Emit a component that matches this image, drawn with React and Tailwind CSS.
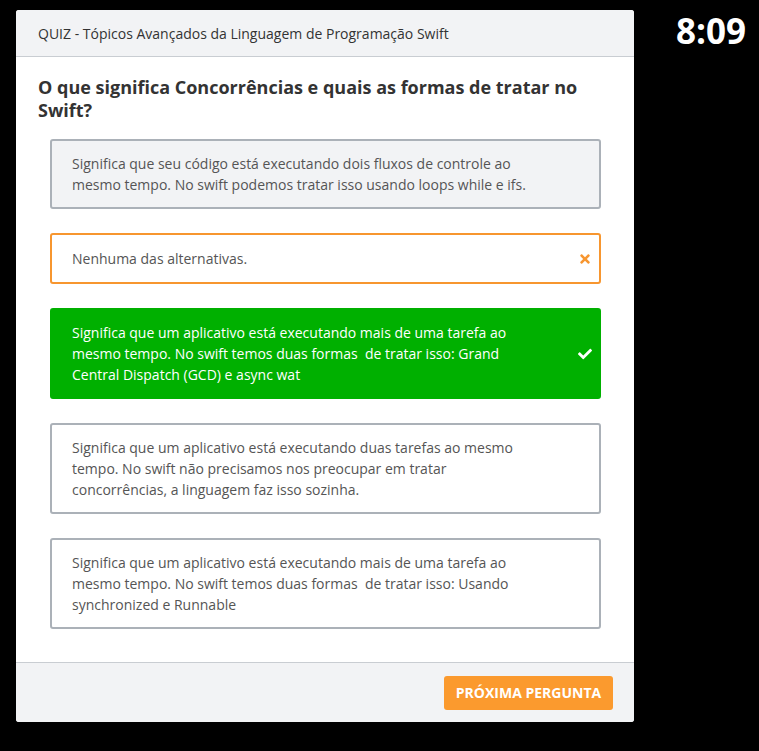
import { FaCheck, FaTimes } from 'react-icons/fa';

const options = [
    {
        text: 'Significa que seu código está executando dois fluxos de controle ao mesmo tempo. No swift podemos tratar isso usando loops while e ifs.',
        state: 'muted',
    },
    { text: 'Nenhuma das alternativas.', state: 'wrong' },
    {
        text: 'Significa que um aplicativo está executando mais de uma tarefa ao mesmo tempo. No swift temos duas formas  de tratar isso: Grand Central Dispatch (GCD) e async wat',
        state: 'right',
    },
    {
        text: 'Significa que um aplicativo está executando duas tarefas ao mesmo tempo. No swift não precisamos nos preocupar em tratar concorrências, a linguagem faz isso sozinha.',
        state: 'idle',
    },
    {
        text: 'Significa que um aplicativo está executando mais de uma tarefa ao mesmo tempo. No swift temos duas formas  de tratar isso: Usando synchronized e Runnable',
        state: 'idle',
    },
];

const boxStyles = {
    muted: 'bg-[#f2f3f5] border-[#abb1b8] text-[#555]',
    wrong: 'bg-white border-[#f7962f] text-[#555]',
    right: 'bg-[#00b000] border-[#00b000] text-white',
    idle: 'bg-white border-[#abb1b8] text-[#555]',
};

function Option({ text, state }) {
    return (
        <div className={`flex min-h-[51px] items-center rounded-[3px] border-2 pl-[20px] pr-[6px] py-[12px] ${boxStyles[state]}`}>
            <p className="w-[460px] text-[14px] leading-[21px] whitespace-pre-wrap">{text}</p>
            <div className="ml-auto flex w-[16px] justify-center">
                {state === 'wrong' && <FaTimes className="h-[14px] w-[14px] text-[#f7962f]" />}
                {state === 'right' && <FaCheck className="h-[14px] w-[14px] text-white" />}
            </div>
        </div>
    );
}

export default function App() {
    return (
        <div className="flex min-h-[751px] bg-black font-['Open_Sans',sans-serif]">
            {/* Quiz card */}
            <div className="ml-[16px] mt-[10px] mb-auto w-[618px] overflow-hidden rounded-[3px] bg-white">
                <div className="flex h-[47px] items-center border-b border-[#c9cdd2] bg-[#f2f3f5] px-[22px] text-[14px] text-[#333]">
                    QUIZ - Tópicos Avançados da Linguagem de Programação Swift
                </div>

                <div className="px-[22px] pt-[19px] pb-[33px]">
                    <h1 className="text-[18px] font-bold leading-[23px] text-[#333]">
                        O que significa Concorrências e quais as formas de tratar no Swift?
                    </h1>
                    <div className="mt-[17px] ml-[12px] mr-[11px] flex flex-col gap-[24px]">
                        {options.map((o, i) => (
                            <Option key={i} {...o} />
                        ))}
                    </div>
                </div>

                <div className="flex h-[60px] items-center justify-end border-t border-[#c9cdd2] bg-[#f2f3f5] pr-[21px]">
                    <button className="h-[34px] w-[169px] rounded-[3px] bg-[#fb9a2e] text-[14px] font-bold text-white">
                        PRÓXIMA PERGUNTA
                    </button>
                </div>
            </div>

            {/* Timer */}
            <div className="ml-auto mr-[13px] mt-[8px] text-[35px] font-bold leading-[46px] text-white">8:09</div>
        </div>
    );
}
